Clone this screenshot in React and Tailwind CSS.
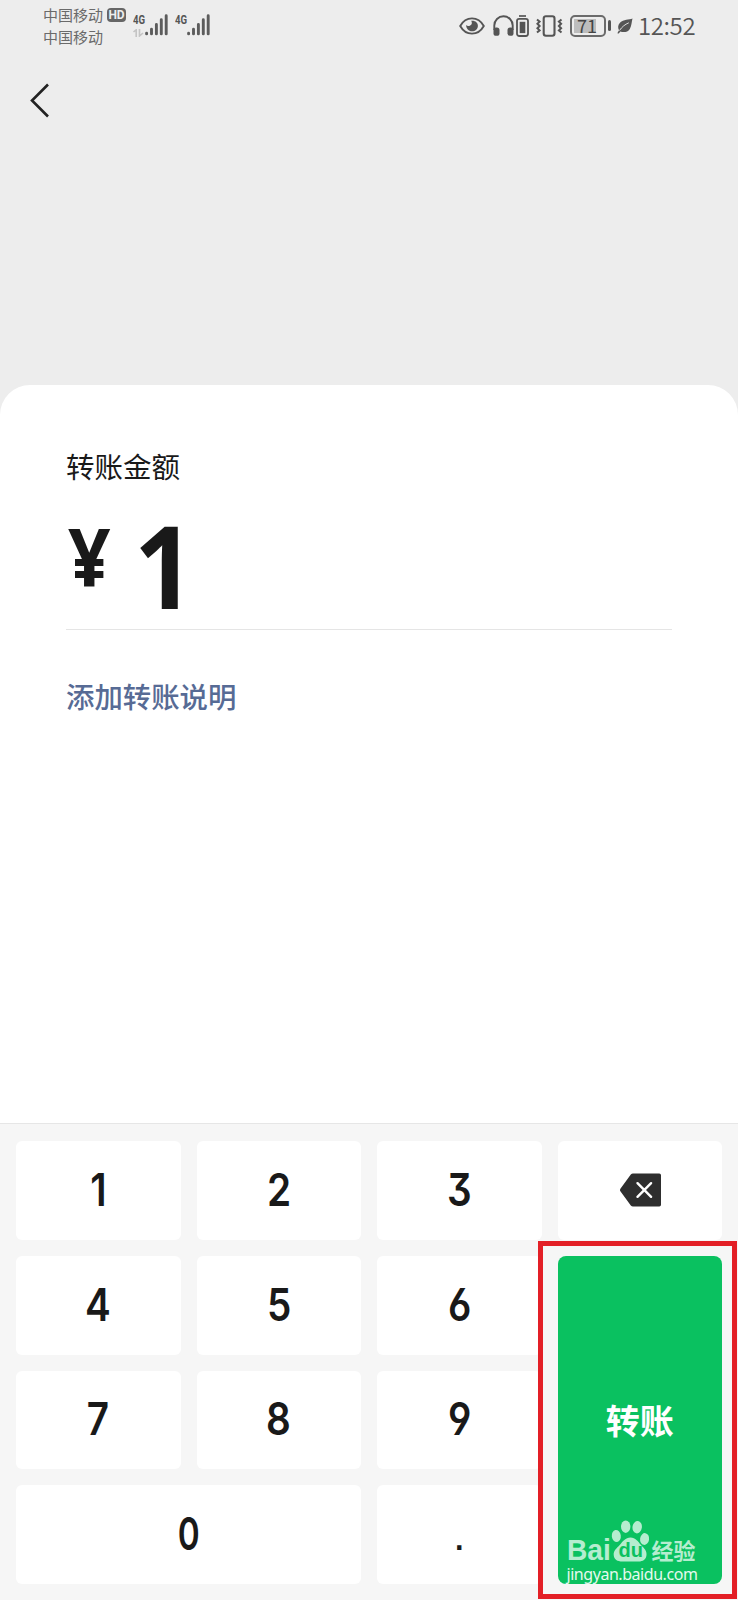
import React from 'react'

const keys = ['1', '2', '3', 'del', '4', '5', '6', 'pay', '7', '8', '9', '0', '.']

const Signal = () => (
    <svg width="23" height="22" viewBox="0 0 23 22" fill="none" stroke="#5c5c5c" strokeWidth="2.9" strokeLinecap="round">
        <path d="M1.6 19.2v.7M6.5 15.2v4.7M11.4 10.4v9.5M16.3 5.8v14.1M21.2 1.8v18.1" />
    </svg>
)

const Eye = () => (
    <svg width="26" height="18" viewBox="0 0 26 18" fill="none">
        <path d="M1.2 9C4 4 8.200 1.400 13 1.400S22 4 24.800 9C22 14 17.800 16.600 13 16.600S4 14 1.200 9z" stroke="#555" strokeWidth="1.900" />
        <path d="M12.200 3.800c1.500 2.600.2 4.800-2.200 5.100-1.300.2-2.300-.3-2.900-.9.100 3.600 2.500 6.300 5.900 6.300 3.300 0 5.900-2.400 5.900-5.600 0-3-2.700-5.400-6.700-4.900z" fill="#555" />
    </svg>
)

const Headphones = () => (
    <svg width="21" height="21" viewBox="0 0 21 21" fill="none">
        <path d="M1.300 15v-4.500a9.200 9.200 0 0 1 18.400 0V15" stroke="#555" strokeWidth="1.900" />
        <rect x=".5" y="12.500" width="6" height="8.300" rx="2.600" fill="#555" />
        <rect x="14.500" y="12.500" width="6" height="8.300" rx="2.600" fill="#555" />
    </svg>
)

const DeviceBattery = () => (
    <svg width="13" height="22" viewBox="0 0 13 22" fill="none">
        <path d="M3 1h7" stroke="#555" strokeWidth="1.700" />
        <rect x="1" y="3.800" width="11" height="17.200" rx="2.200" stroke="#555" strokeWidth="1.800" />
        <rect x="3.700" y="6.800" width="5.600" height="11.300" fill="#555" />
    </svg>
)

const Vibrate = () => (
    <svg width="27" height="22" viewBox="0 0 27 22" fill="none" stroke="#555">
        <rect x="7.700" y="1.200" width="10.800" height="19.600" rx="2.200" strokeWidth="2.100" />
        <path d="M1 4.500l2.600 2.100-2.200 2.200 2.200 2.200-2.200 2.200 2.200 2.200-2.600 2.100M25.500 4.500l-2.600 2.100 2.200 2.200-2.200 2.200 2.200 2.200-2.200 2.200 2.600 2.100" strokeWidth="2" />
    </svg>
)

const Leaf = () => (
    <svg width="16" height="16" viewBox="0 0 16 16">
        <path d="M15.500.5C12 1.700 6.500 1.500 3.200 4.600.9 6.800.6 9.800 2 12.200L.3 15.200l1.500.4 1.500-2.200c3.500 1.300 7.500.7 9.500-2.500C14.800 7.700 14.600 3.500 15.500.5z" fill="#555" />
        <path d="M2.500 12.500C5 8.800 8 6.400 11.800 4.800" stroke="#ededed" strokeWidth=".9" fill="none" />
    </svg>
)

const Backspace = () => (
    <svg className="ml-[2px]" width="42" height="34" viewBox="0 0 42 34">
        <path d="M.4 15.700L10.800 1.500Q11.700.5 13 .5h26.300q1.700 0 1.700 1.700v29.600q0 1.700-1.700 1.700H13q-1.300 0-2.200-1L.4 18.300q-.8-1.300 0-2.600z" fill="#2e2e2e" />
        <path d="M17.500 10.200l13.600 13.600M31.100 10.200L17.500 23.800" stroke="#fff" strokeWidth="2.400" strokeLinecap="round" />
    </svg>
)

const Paw = () => (
    <svg width="39" height="42" viewBox="0 0 39 42" fill="#b5edcf">
        <ellipse cx="5.300" cy="16" rx="4.500" ry="6" transform="rotate(-8 5.300 16)" />
        <ellipse cx="14.700" cy="6.700" rx="4.700" ry="6.200" />
        <ellipse cx="26.200" cy="7.200" rx="4.700" ry="6.200" transform="rotate(8 26.200 7.200)" />
        <ellipse cx="33.600" cy="19" rx="4.500" ry="5.900" transform="rotate(8 33.600 19)" />
        <path d="M19.500 17.500c5 0 7.500 4 10.500 7.500 3 3.200 6 5.500 5.500 10-.4 4.500-3.600 6.500-8 6.500H11.300c-5 0-8.300-2-8.600-6.500-.3-4.500 3-6.800 6-10 3-3.500 5.800-7.500 10.800-7.500z" />
    </svg>
)

const StatusBar = () => (
    <div className="flex h-[52px] text-[#555]">
        <div className="ml-[43px] pt-1 text-[15px] leading-[22px] text-[#6a6a6a]">
            <div className="flex items-center">
                <span>中国移动</span>
                <span className="ml-[4px] flex h-[14px] w-[19px] items-center justify-center rounded-[4px] bg-[#666] text-[12px] leading-none font-bold text-[#eee] font-['Roboto',sans-serif]">HD</span>
            </div>
            <div>中国移动</div>
        </div>
        <div className="ml-[7px] mt-[14px] flex font-['Roboto',sans-serif]">
            <div className="w-[12px] text-[13px] leading-[12px] font-bold">
                <div className="origin-left scale-x-[.74]">4G</div>
                <svg className="mt-[3px]" width="11" height="8" viewBox="0 0 11 8" fill="none" stroke="#c4c4c4" strokeWidth="1.600">
                    <path d="M.5 3L3.200.8V8M6.500 0v7L10 4" />
                </svg>
            </div>
            <Signal />
            <div className="ml-[7px] w-[12px] text-[13px] leading-[12px] font-bold">
                <div className="origin-left scale-x-[.74]">4G</div>
            </div>
            <Signal />
        </div>
        <div className="ml-auto mr-[42px] flex h-[51px] items-center">
            <Eye />
            <div className="ml-[8px]"><Headphones /></div>
            <div className="ml-[2px]"><DeviceBattery /></div>
            <div className="ml-[7px]"><Vibrate /></div>
            <div className="ml-[7px] flex h-[22px] w-[36px] items-center rounded-[5px] border-2 border-[#6b6b6b] p-[2px]">
                <div className="flex h-full w-[22px] items-center justify-center bg-[#bdbdbd] pb-[2px] pl-[4px] text-[18px] leading-none text-[#444] font-['Noto_Sans_CJK_SC',sans-serif]">71</div>
            </div>
            <div className="ml-[2px] h-[11px] w-[3px] rounded-sm bg-[#555]" />
            <div className="ml-[6px]"><Leaf /></div>
            <span className="ml-[5px] w-[58px] pb-[1px] text-[24px] leading-none font-[350] tracking-[-0.4px] whitespace-nowrap">12:52</span>
        </div>
    </div>
)

const PayKey = () => (
    <button className="relative row-span-3 rounded-lg bg-[#0ac160] text-[34px] font-bold text-white">
        转账
        <div className="absolute bottom-0 left-[9px] flex h-[64px] w-[140px] flex-col text-[#b5edcf]">
            <div className="flex h-[42px] items-end">
                <div className="w-[44px] text-[30px] leading-[24px] font-['Liberation_Sans',sans-serif]">
                    <div className="w-[48px] origin-left scale-x-[.94] text-left">Bai</div>
                </div>
                <div className="relative">
                    <Paw />
                    <div className="absolute bottom-[2px] left-[8px] text-[20px] leading-[20px] text-[#0ac160] font-['Liberation_Sans',sans-serif]">du</div>
                </div>
                <div className="ml-[2px] pb-[1px] text-[22px] leading-[23px] whitespace-nowrap">经验</div>
            </div>
            <div className="mt-[4px] text-left text-[16px] leading-[17px] font-normal tracking-[-0.45px] text-[#e4faee] font-['Noto_Sans',sans-serif]">jingyan.baidu.com</div>
        </div>
    </button>
)

const Key = ({ value }) => {
    if (value === 'pay') return <PayKey />
    return (
        <button className={`flex items-center justify-center rounded-md bg-white ${value === '0' ? 'col-span-2' : ''}`}>
            {value === 'del' && <Backspace />}
            {value === '.' && <span className="pb-[1px] text-[45px] leading-none font-['Liberation_Sans',sans-serif]">.</span>}
            {value !== 'del' && value !== '.' && (
                <span className={`pb-[2px] text-[45px] leading-none font-[560] font-['Inter',sans-serif] [font-feature-settings:'cv03','cv04','cv09'] ${value === '0' ? 'scale-x-[.74]' : 'scale-x-[.86]'}`}>{value}</span>
            )}
        </button>
    )
}

const App = () => {
    return (
        <div className="relative flex h-[1600px] w-[738px] flex-col overflow-hidden bg-[#ededed] text-[#191919] font-['Noto_Sans_CJK_SC',sans-serif]">
            <StatusBar />
            <div className="h-[333px] pt-[31px] pl-[30px]">
                <svg width="20" height="36" viewBox="0 0 20 36" fill="none" stroke="#222" strokeWidth="2.600">
                    <path d="M18 1.500L2 17.500l16 16" />
                </svg>
            </div>
            <div className="flex h-[738px] flex-col rounded-t-[30px] bg-white px-[66px] pt-[61px]">
                <h1 className="text-[28.500px] leading-[40px]">转账金额</h1>
                <div className="mt-[20px] flex h-[124px] items-start border-b border-[#e5e5e5] font-bold font-['Noto_Sans',sans-serif]">
                    <span className="ml-[2px] w-[66px] origin-left scale-x-[.92] text-[81px] leading-[99px]">¥</span>
                    <span className="origin-left scale-x-[.93] text-[114px] leading-[117px]">1</span>
                </div>
                <a className="mt-[46px] text-[28.400px] leading-[40px] font-medium text-[#576b95]">添加转账说明</a>
            </div>
            <div className="grid h-[477px] grid-cols-4 grid-rows-4 gap-4 border-t border-[#e6e6e6] bg-[#f6f6f6] px-4 pt-[17px] pb-4">
                {keys.map((key) => <Key key={key} value={key} />)}
            </div>
            <div className="pointer-events-none absolute top-[1241px] left-[538px] h-[358px] w-[199px] border-[5.500px] border-[#e31f26]" />
        </div>
    )
}

export default App
